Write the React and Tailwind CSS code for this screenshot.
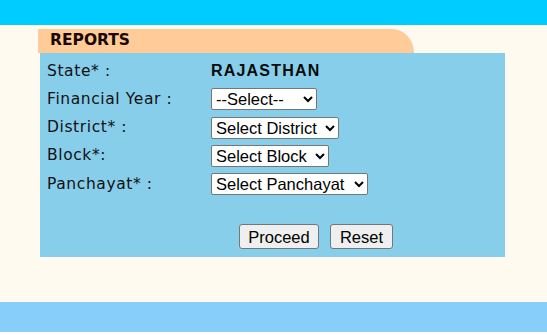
import React from 'react';

const labelFont = { fontFamily: '"DejaVu Sans", Verdana, sans-serif' };
const ctrlFont = { fontFamily: '"Liberation Sans", Arial, sans-serif' };

const rows = [
  { label: 'Financial Year :', options: ['--Select--', '2023-2024'], width: 'w-[106px]' },
  { label: 'District* :', options: ['Select District'], width: 'w-[128px]' },
  { label: 'Block*:', options: ['Select Block'], width: 'w-[118px]' },
  { label: 'Panchayat* :', options: ['Select Panchayat'], width: 'w-[157px]' },
];

const App = () => {
  return (
    <div className="w-[547px] h-[335px] bg-white flex flex-col overflow-hidden">
      {/* Top bar */}
      <div className="h-[25px] bg-[#00ccff]" />

      <div className="h-[277px] bg-[#fffaf0] pt-[4px] pl-[38px]">
        {/* Tab */}
        <div
          className="w-[376px] h-[24px] bg-[#ffcc99] rounded-tr-[22px_24px] pl-[12px] flex items-center text-[15.5px] font-bold text-[#1a0800]"
          style={labelFont}
        >
          REPORTS
        </div>

        {/* Form panel */}
        <div className="ml-[2px] w-[465px] h-[204px] bg-[#87ceeb] pt-[4px] pl-[7px] flex flex-col">
          <div className="h-[28.3px] flex items-center">
            <span className="w-[164px] text-[15.5px] tracking-[0.6px] text-[#111]" style={labelFont}>State* :</span>
            <span className="text-[16px] font-bold tracking-[1.2px] text-[#0a0a0a]" style={ctrlFont}>RAJASTHAN</span>
          </div>
          {rows.map((r) => (
            <div key={r.label} className="h-[28.3px] flex items-center">
              <span className="w-[164px] text-[15.5px] tracking-[0.6px] text-[#111]" style={labelFont}>{r.label}</span>
              <select
                className={`${r.width} h-[22px] bg-white border border-[#767676] rounded-[2px] text-[16.5px] text-black`}
                style={ctrlFont}
              >
                {r.options.map((o) => (
                  <option key={o}>{o}</option>
                ))}
              </select>
            </div>
          ))}

          <div className="mt-[25.5px] pl-[192px] flex gap-[11px]" style={ctrlFont}>
            <button className="w-[80px] h-[25px] bg-[#efefef] border border-[#767676] rounded-[3px] text-[16.5px] text-black">
              Proceed
            </button>
            <button className="w-[63px] h-[25px] bg-[#efefef] border border-[#767676] rounded-[3px] text-[16.5px] text-black">
              Reset
            </button>
          </div>
        </div>
      </div>

      {/* Bottom bar */}
      <div className="h-[30px] bg-[#87cefa]" />
    </div>
  );
};

export default App;
